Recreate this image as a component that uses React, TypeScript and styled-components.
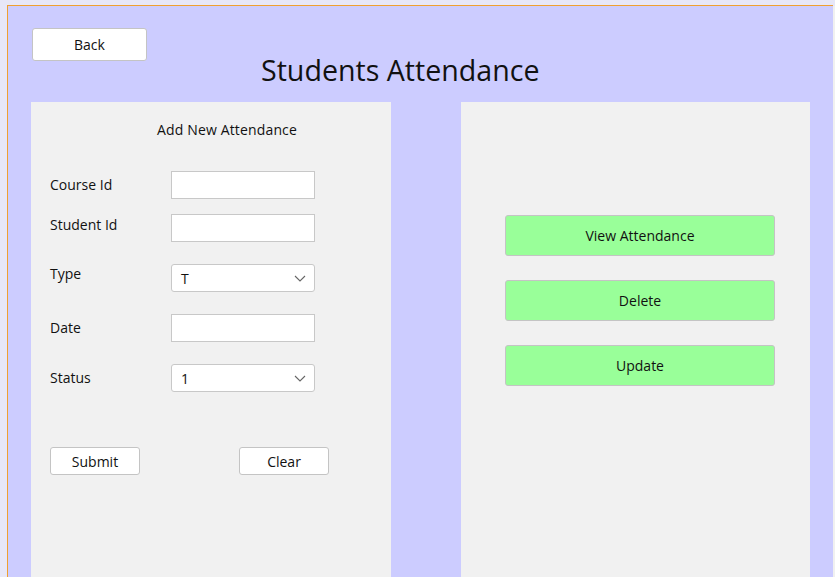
import React from "react";
import styled, { createGlobalStyle } from "styled-components";

const Global = createGlobalStyle`
  html, body { margin: 0; padding: 0; background: #e7e7f8; }
  body { font-family: "Open Sans", "Noto Sans", sans-serif; color: #111; }
  #root { width: 835px; height: 577px; overflow: hidden; }
`;

const Frame = styled.div`
  margin: 5px 0 0 7px;
  width: 826px;
  height: 572px;
  box-sizing: border-box;
  border-top: 1px solid #f0a030;
  border-left: 1px solid #f0a030;
  background: #ccccff;
  display: flex;
  flex-direction: column;
  position: relative;
  &::after {
    content: "";
    position: absolute;
    top: 0;
    right: -2px;
    width: 2px;
    height: 100%;
    background: #f0f0f0;
  }
`;

const Header = styled.div`
  padding: 22px 0 0 24px;
  height: 96px;
  flex: none;
  box-sizing: border-box;
  position: relative;
`;

const Button = styled.button<{ $w: number; $h: number; $bg?: string }>`
  width: ${(p) => p.$w}px;
  height: ${(p) => p.$h}px;
  background: ${(p) => p.$bg ?? "#ffffff"};
  border: 1px solid #c4c4c4;
  border-radius: 3px;
  font-family: inherit;
  font-size: 14px;
  color: #111;
  padding: 0;
  display: flex;
  align-items: center;
  justify-content: center;
  box-sizing: border-box;
`;

const Title = styled.h1`
  margin: 0;
  position: absolute;
  left: 253px;
  top: 46px;
  font-size: 28.6px;
  font-weight: 400;
  line-height: 36px;
  color: #111;
`;

const Panels = styled.div`
  display: flex;
  gap: 70px;
  padding-left: 23px;
  flex: 1;
`;

const LeftPanel = styled.div`
  width: 360px;
  background: #f1f1f1;
  padding: 18px 0 0 19px;
  box-sizing: border-box;
`;

const RightPanel = styled.div`
  width: 349px;
  background: #f1f1f1;
  padding: 113px 0 0 44px;
  box-sizing: border-box;
  display: flex;
  flex-direction: column;
  gap: 24px;
`;

const Subtitle = styled.div`
  font-size: 14px;
  margin-left: 107px;
  line-height: 20px;
  letter-spacing: 0.15px;
`;

const Row = styled.div<{ $mt: number; $lo?: number }>`
  display: grid;
  grid-template-columns: 121px 144px;
  align-items: center;
  margin-top: ${(p) => p.$mt}px;
  & > span {
    font-size: 14px;
    line-height: 20px;
    position: relative;
    top: ${(p) => p.$lo ?? 0}px;
  }
`;

const Input = styled.div`
  width: 144px;
  height: 28px;
  background: #fff;
  border: 1px solid #c8c8c8;
  box-sizing: border-box;
`;

const Select = styled.div`
  width: 144px;
  height: 28px;
  background: #fff;
  border: 1px solid #c8c8c8;
  border-radius: 3px;
  box-sizing: border-box;
  display: flex;
  align-items: center;
  justify-content: space-between;
  padding: 0 8px 0 9px;
  font-size: 14px;
`;

const Actions = styled.div`
  display: flex;
  gap: 99px;
  margin-top: 55px;
`;

const Chevron = () => (
  <svg width="12" height="7" viewBox="0 0 12 7">
    <polyline points="1,1 6,6 11,1" fill="none" stroke="#666" strokeWidth="1.1" />
  </svg>
);

export default function App() {
  return (
    <>
      <Global />
      <Frame>
        <Header>
          <Button $w={115} $h={33}>Back</Button>
          <Title>Students Attendance</Title>
        </Header>
        <Panels>
          <LeftPanel>
            <Subtitle>Add New Attendance</Subtitle>
            <Row $mt={31}>
              <span>Course Id</span>
              <Input />
            </Row>
            <Row $mt={15} $lo={-3}>
              <span>Student Id</span>
              <Input />
            </Row>
            <Row $mt={22} $lo={-4}>
              <span>Type</span>
              <Select>T<Chevron /></Select>
            </Row>
            <Row $mt={22}>
              <span>Date</span>
              <Input />
            </Row>
            <Row $mt={22}>
              <span>Status</span>
              <Select>1<Chevron /></Select>
            </Row>
            <Actions>
              <Button $w={90} $h={28}>Submit</Button>
              <Button $w={90} $h={28}>Clear</Button>
            </Actions>
          </LeftPanel>
          <RightPanel>
            <Button $w={270} $h={41} $bg="#99ff99">View Attendance</Button>
            <Button $w={270} $h={41} $bg="#99ff99">Delete</Button>
            <Button $w={270} $h={41} $bg="#99ff99">Update</Button>
          </RightPanel>
        </Panels>
      </Frame>
    </>
  );
}
